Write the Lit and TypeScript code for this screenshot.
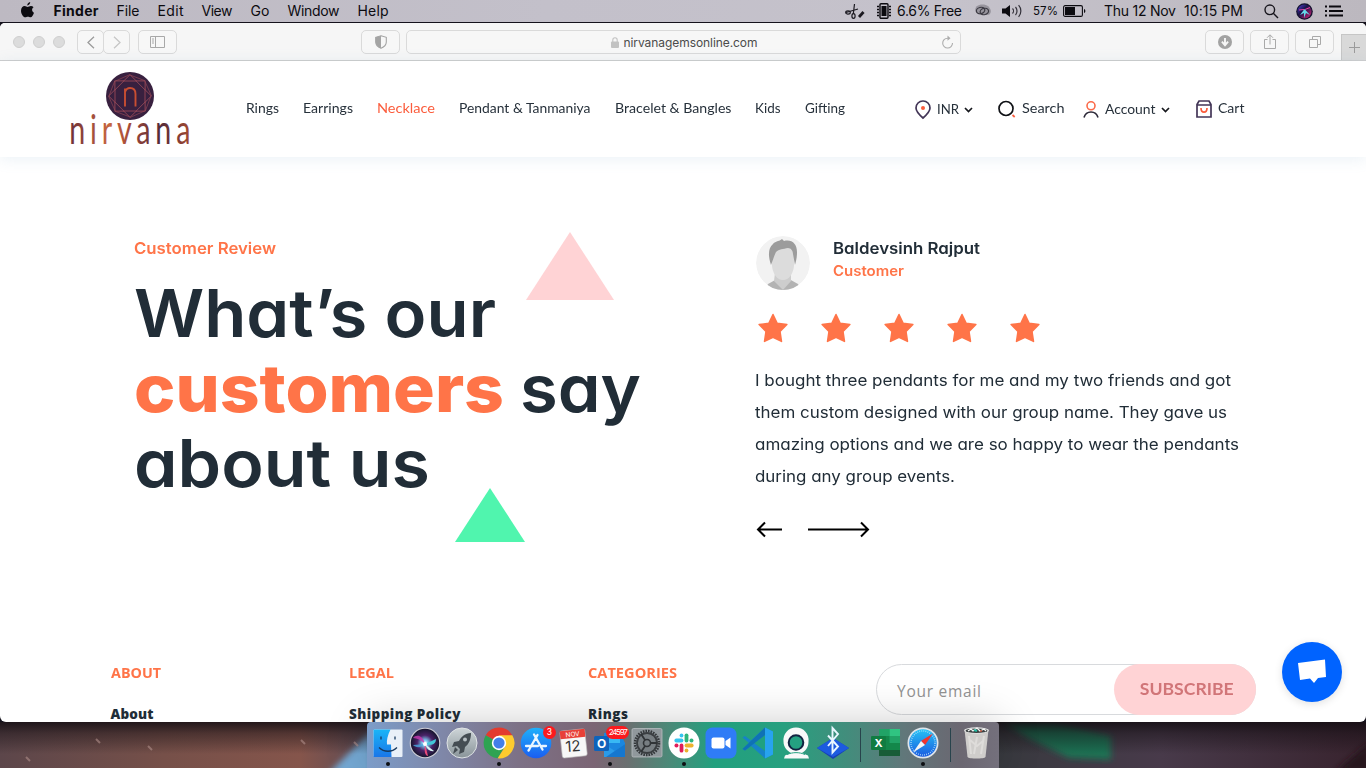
import { LitElement, html, css, svg } from "lit";
import { customElement } from "lit/decorators.js";

// A label set to an exact width: letter spacing absorbs the difference,
// or, with the "wide" class, the glyphs themselves are stretched.
const fit = (text: string, w: number, cls = "") =>
  html`<span class="fit ${cls}" data-w=${w}>${text}</span>`;

const base = css`
  :host { display: block; box-sizing: border-box; }
  * { box-sizing: border-box; }
  svg { display: block; flex: none; overflow: visible; }
  .fit { display: inline-block; white-space: nowrap; flex: none; transform-origin: 0 50%; }
`;

class FitElement extends LitElement {
  firstUpdated() {
    this.renderRoot.querySelectorAll<HTMLElement>(".fit").forEach((el) => {
      const target = Number(el.dataset.w);
      const natural = el.getBoundingClientRect().width;
      const n = (el.textContent || "").length - 1;
      if (el.classList.contains("wide")) el.style.transform = `scaleX(${(target / natural).toFixed(4)})`;
      else if (n > 0) el.style.letterSpacing = `${((target - natural) / n).toFixed(3)}px`;
      el.style.width = `${target}px`;
    });
  }
}

@customElement("menu-bar")
class MenuBar extends FitElement {
  static styles = [base, css`
    :host { height: 23px; border-bottom: 1px solid #15121c; color: #0c0b10;
      background: linear-gradient(90deg, #bdb9c2, #c3c0ca 40%, #c5c2cb 70%, #bcb8bf);
      font: 14px/22px Inter, sans-serif; }
    .bar { display: flex; height: 22px; align-items: center; }
    .apple { margin: 0 0 2px 21px; }
    .menus { display: flex; gap: 18px; margin-left: 19.500px; }
    .bold { font-weight: 700; }
    .status { display: flex; align-items: center; margin-left: auto; padding-right: 23px; }
    .free { margin-left: 6px; }
    .small { font-size: 11.5px; }
    .chip { margin-left: 12px; }
    .swirl { margin-left: 11px; }
    .vol { margin-left: 11px; }
    .pct { margin-left: 10px; }
    .batt { margin-left: 5px; }
    .date { margin-left: 18px; }
    .time { margin-left: 8px; }
    .find { margin-left: 21px; }
    .siri { margin-left: 17px; }
    .list { margin-left: 12px; }
  `];
  render() {
    return html`<div class="bar">
      <svg class="apple" width="13" height="16" viewBox="0 0 13 16"><path fill="#0c0b10" d="M9.2 0c.1 1.7-1.200 3.300-2.900 3.500C6.100 1.900 7.500.300 9.200 0zM12.600 5.300C10.400 6.700 10.700 9.700 13 10.700c-.6 1.900-2 4.600-3.500 4.600-.9 0-1.400-.6-2.600-.6s-1.700.6-2.600.6C2.400 15.300 0 12 0 8.700 0 5.900 1.700 4.100 3.700 4.100c1.200 0 2.100.8 2.900.8.8 0 1.900-.8 3.300-.8 1 0 2 .4 2.700 1.200z"/></svg>
      <div class="menus">
        ${fit("Finder", 45, "bold")}${fit("File", 23)}${fit("Edit", 26)}${fit("View", 31)}${fit("Go", 19)}${fit("Window", 52)}${fit("Help", 31)}
      </div>
      <div class="status">
        <svg width="20" height="17" viewBox="0 0 20 17" fill="none" stroke="#1b1920" stroke-width="1.200"><path d="M9.500 1L8.300 11M1 9.500L13 6"/><ellipse cx="3" cy="9.500" rx="2.300" ry="1.600"/><ellipse cx="8.500" cy="13" rx="1.600" ry="2.300"/><path stroke-width="2.800" d="M14 14l4.500-5"/></svg>
        <svg class="chip" width="14" height="16" viewBox="0 0 14 16"><rect x="3" y=".7" width="8" height="14.600" rx="1" fill="none" stroke="#0c0b10" stroke-width="1.400"/><rect x="4.500" y="3" width="5" height="10" fill="#0c0b10"/><path stroke="#0c0b10" stroke-width="1.300" d="M0 3.500h2M0 6.500h2M0 9.500h2M0 12.500h2M12 3.500h2M12 6.500h2M12 9.500h2M12 12.500h2"/></svg>
        ${fit("6.6% Free", 65, "free")}
        <svg class="swirl" width="18" height="14" viewBox="0 0 19 14"><path fill="#97949d" d="M4 2c3-2.500 9-2.500 12 0 3 3 4 6 1 9H9C4 11 0 6 4 2z"/><g fill="none" stroke="#3b3942" stroke-width="1.300"><ellipse cx="8" cy="6.500" rx="4.500" ry="3.300" transform="rotate(-15 8 6.500)"/><ellipse cx="12" cy="7.500" rx="4.500" ry="3.300" transform="rotate(-15 12 7.500)"/></g></svg>
        <svg class="vol" width="21" height="14" viewBox="0 0 21 14"><path fill="#0c0b10" d="M0 4.500h3.500L8 1v12L3.500 9.500H0z"/><path fill="none" stroke="#33313a" stroke-width="1.200" d="M10.500 4.500c1.300 1.300 1.300 3.700 0 5M13.500 3c2 2.200 2 5.800 0 8M16.600 1.200c3 3.300 3 8.300 0 11.600"/></svg>
        ${fit("57%", 25, "small pct")}
        <svg class="batt" width="23" height="12" viewBox="0 0 23 12"><rect x=".6" y=".6" width="18.800" height="10.800" rx="1.500" fill="none" stroke="#0c0b10" stroke-width="1.100"/><rect x="2" y="2" width="10" height="8" fill="#0c0b10"/><path d="M21 4c1.800.5 1.800 3.500 0 4z" fill="#0c0b10"/></svg>
        ${fit("Thu 12 Nov", 72, "date")}${fit("10:15 PM", 59, "time")}
        <svg class="find" width="15" height="15" viewBox="0 0 15 15" fill="none" stroke="#17151c" stroke-width="1.400"><circle cx="5.800" cy="5.800" r="4.800"/><path d="M9.300 9.300L14 14"/></svg>
        <svg class="siri" width="17" height="17" viewBox="0 0 17 17"><defs><linearGradient id="ms" x2="1" y2="1"><stop stop-color="#5440d8"/><stop offset=".4" stop-color="#19124a"/><stop offset="1" stop-color="#db2577"/></linearGradient></defs><circle cx="8.500" cy="8.500" r="8.300" fill="#14122e"/><circle cx="8.500" cy="8.500" r="7" fill="url(#ms)"/><path d="M8.500 6L4 12l4-2v5l2-5 4 2z" fill="#65d9ea"/><path d="M8 6.500L3 7M9 6.500l5-2" stroke="#e541a0"/></svg>
        <svg class="list" width="18" height="12" viewBox="0 0 18 12" stroke="#0c0b10" stroke-width="1.800"><path d="M0 1.500h2M0 6h2M0 10.500h2M4 1.500h12M4 6h14M4 10.500h14"/></svg>
      </div>
    </div>`;
  }
}

@customElement("browser-bar")
class BrowserBar extends FitElement {
  static styles = [base, css`
    :host { height: 38px; background: #f6f6f6; border-bottom: 1px solid #cdcdcd; font: 12px/23px Inter, sans-serif; color: #4b4b4b; }
    .bar { display: flex; height: 37px; align-items: center; padding: 1px 0 0 13px; }
    .lights { display: flex; gap: 8px; }
    .light { width: 12px; height: 12px; border-radius: 50%; background: #dcdcdc; border: 1px solid #cfcfcf; }
    .btn { height: 24px; width: 39px; border: 1px solid #dadada; border-radius: 5px; display: flex; align-items: center; justify-content: center; background: #f7f7f7; flex: none; }
    .pair { display: flex; margin: 0 8px 0 12px; }
    .half { width: 27px; }
    .half + .half { margin-left: -1px; }
    .shield { margin-left: 184px; }
    .url { width: 555px; margin-left: 6px; padding: 0 6px 0 204px; justify-content: flex-start; }
    .lock { margin-right: 4.500px; }
    .reload { margin-left: auto; }
    .right { display: flex; gap: 6px; margin-left: 244px; }
    .tab { width: 25px; height: 26px; border: 1px solid #c6c6c6; border-width: 1px 0 0 1px; background: #d9d9d9; margin-left: 7px; align-self: flex-end; display: flex; align-items: center; justify-content: center; }
  `];
  render() {
    return html`<div class="bar">
      <div class="lights"><i class="light"></i><i class="light"></i><i class="light"></i></div>
      <div class="pair">
        <div class="btn half"><svg width="8" height="13" viewBox="0 0 8 13" fill="none" stroke="#9b9b9b" stroke-width="1.300"><path d="M7 .8L1 6.500l6 5.700"/></svg></div>
        <div class="btn half"><svg width="8" height="13" viewBox="0 0 8 13" fill="none" stroke="#c6c6c6" stroke-width="1.300"><path d="M1 .8l6 5.700-6 5.700"/></svg></div>
      </div>
      <div class="btn"><svg width="15" height="12" viewBox="0 0 15 12" fill="none" stroke="#a8a8a8"><path d="M.5.5h14v11H.5zM5.500.5v11M2 3h2M2 5h2M2 7h2"/></svg></div>
      <div class="btn shield"><svg width="12" height="14" viewBox="0 0 12 14"><path d="M6 .7l5.300 1.600V7c0 3-2.300 5-5.300 6.300C3 12 .7 10 .7 7V2.300z" fill="none" stroke="#a4a4a4" stroke-width="1.100"/><path d="M6 .7v12.600C3 12 .7 10 .7 7V2.300z" fill="#a4a4a4"/></svg></div>
      <div class="btn url">
        <svg class="lock" width="8" height="11" viewBox="0 0 8 11"><rect y="4.500" width="8" height="6.500" rx="1" fill="#c2c2c2"/><path d="M1.800 5V3a2.200 2.200 0 014.400 0v2" fill="none" stroke="#c2c2c2" stroke-width="1.100"/></svg>
        ${fit("nirvanagemsonline.com", 134)}
        <svg class="reload" width="13" height="14" viewBox="0 0 13 14" fill="none" stroke="#acacac" stroke-width="1.100"><path d="M8 3.200H6.500a4.900 4.900 0 105 4.900"/><path d="M6.500.5L9.500 3.200l-3 2.600z" fill="#acacac" stroke="none"/></svg>
      </div>
      <div class="right">
        <div class="btn"><svg width="14" height="14" viewBox="0 0 14 14"><circle cx="7" cy="7" r="7" fill="#a2a2a2"/><path d="M7 3v5.500M3.900 6.700L7 10.200l3.100-3.500" stroke="#f6f6f6" stroke-width="1.900" fill="none"/></svg></div>
        <div class="btn"><svg width="12" height="16" viewBox="0 0 12 16" fill="none" stroke="#a9a9a9"><path d="M3.500 5.500h-3v9h11v-9h-3M6 10.500V1M3 3.800L6 .8l3 3"/></svg></div>
        <div class="btn"><svg width="12" height="12" viewBox="0 0 12 12" fill="none" stroke="#a9a9a9"><path d="M.5 3.500h8v8h-8zM3.500 3V.5h8v8H9"/></svg></div>
      </div>
      <div class="tab"><svg width="11" height="11" viewBox="0 0 11 11" stroke="#9b9b9b"><path d="M5.500 0v11M0 5.500h11"/></svg></div>
    </div>`;
  }
}

@customElement("shop-header")
class ShopHeader extends FitElement {
  static styles = [base, css`
    :host { height: 96px; background: #fff; box-shadow: 0 2px 14px rgba(125, 165, 200, .16); font: 13.300px/20px Lato, sans-serif; color: #27313b; }
    .bar { display: flex; align-items: center; height: 96px; padding-left: 70px; }
    .nav { display: flex; gap: 24px; margin: 0 0 2px 56px; }
    .active { color: #fb5c3c; }
    .tool { display: flex; align-items: center; }
    .tool .fit { margin: 0 0 2px 6px; }
    .chev { margin-left: 5px; }
    .inr { margin-left: 70px; padding-top: 1px; }
    .search { margin-left: 25px; }
    .acct { margin-left: 19px; padding-top: 1px; }
    .cart { margin-left: 26px; }
    .mark { font-family: Lato, sans-serif; }
  `];
  render() {
    const chev = html`<svg class="chev" width="9" height="6" viewBox="0 0 9 6" fill="none" stroke="#16181d" stroke-width="1.700"><path d="M1 1l3.500 3.500L8 1"/></svg>`;
    const spokes = Array.from({ length: 8 }, (_, i) => i * 45);
    return html`<div class="bar">
      <svg width="120" height="80" viewBox="0 0 120 80">
        <defs><linearGradient id="lg"><stop stop-color="#6d3038"/><stop offset=".33" stop-color="#c8673f"/><stop offset=".5" stop-color="#a44a38"/><stop offset=".75" stop-color="#532a38"/><stop offset="1" stop-color="#a34a32"/></linearGradient></defs>
        <circle cx="60" cy="27" r="24" fill="#38203f"/>
        <g fill="none" stroke="#9a4a58" stroke-width=".6">
          ${spokes.map((a) => svg`<path transform="rotate(${a} 60 27)" d="M60 5.500l-6.500 6.500M60 5.500l6.500 6.500M60 5.500L45.500 12M53.500 12L66.500 12"/>`)}
          <path opacity=".7" d="M45 12h30v30H45zM60 6l21 21-21 21-21-21z"/>
        </g>
        <path d="M55 37.500V19.500M55 23c1-3 3-4 5-4 4 0 5.500 2 5.500 6v12.500" fill="none" stroke="#c94e32" stroke-width="1.900"/>
        <text class="mark" transform="scale(.7 1)" x="-1" y="75.500" font-size="41" font-weight="400" textLength="173" lengthAdjust="spacing" fill="url(#lg)">nirvana</text>
      </svg>
      <div class="nav">
        ${fit("Rings", 33, "wide")}${fit("Earrings", 50, "wide")}${fit("Necklace", 58, "wide active")}${fit("Pendant & Tanmaniya", 131.500, "wide")}${fit("Bracelet & Bangles", 116.500, "wide")}${fit("Kids", 25.500, "wide")}${fit("Gifting", 40, "wide")}
      </div>
      <div class="tool inr"><svg width="16" height="19" viewBox="0 0 16 19"><path d="M8 1a6.900 6.900 0 017 7c0 3.500-3 6.500-7 10-4-3.500-7-6.500-7-10a6.900 6.900 0 017-7z" fill="none" stroke="#433657" stroke-width="1.700"/><circle cx="8" cy="8" r="2" fill="#fb5c3c"/></svg>${fit("INR", 22, "wide")}${chev}</div>
      <div class="tool search"><svg width="18" height="18" viewBox="0 0 18 18"><circle cx="8" cy="8.500" r="7" fill="none" stroke="#101216" stroke-width="1.700"/><path d="M14.500 15l2.200 2" stroke="#fb5c3c" stroke-width="1.700"/></svg>${fit("Search", 42.500, "wide")}</div>
      <div class="tool acct"><svg width="16" height="17" viewBox="0 0 16 17" fill="none" stroke-width="1.600"><circle cx="8" cy="4.800" r="4" stroke="#fb6a49"/><path d="M1 16.500c1-3.500 3.700-5.500 7-5.500s6 2 7 5.500" stroke="#2c2938"/></svg>${fit("Account", 50.500, "wide")}${chev}</div>
      <div class="tool cart"><svg width="16" height="18" viewBox="0 0 16 18" fill="none" stroke-width="1.700"><path d="M1 4.500L3 1h10l2 3.500V17H1zM1 5h14" stroke="#433657"/><path d="M5 8c0 5.500 6 5.500 6 0" stroke="#fb5c3c"/></svg>${fit("Cart", 26.500, "wide")}</div>
    </div>`;
  }
}

@customElement("review-section")
class ReviewSection extends FitElement {
  static styles = [base, css`
    :host { height: 507px; position: relative; padding: 79px 0 0 134px; color: #212d37; font-family: Inter, sans-serif; }
    .cols { display: grid; grid-template-columns: 621px 500px; }
    .eyebrow { font: 600 16px/24px Inter, sans-serif; color: #ff7448; }
    .title { margin: 16px 0 0; font: 600 66px/75px Inter, sans-serif; }
    .row { display: flex; gap: 16px; }
    .strong { font-weight: 800; color: #ff7448; }
    .tri { position: absolute; }
    .pink { left: 526px; top: 75px; }
    .green { left: 455px; top: 331px; }
    .who { display: flex; gap: 22px; }
    .name { font: 600 16px/24px Inter, sans-serif; }
    .role { font: 600 14px/22px Inter, sans-serif; color: #ff7448; }
    .names { display: flex; flex-direction: column; align-items: flex-start; }
    .stars { display: flex; gap: 33px; margin: 23px 0 0 2.500px; }
    .quote { font: 400 16px/32px Inter, sans-serif; margin-top: 21px; display: flex; flex-direction: column; align-items: flex-start; }
    .arrows { display: flex; gap: 26px; margin: 29px 0 0 2px; }
    .fit { font-feature-settings: "cv11" 1; }
  `];
  render() {
    return html`
      <div class="cols">
        <div>
          <div class="eyebrow">${fit("Customer Review", 142, "wide")}</div>
          <div class="title">
            <div class="row">${fit("What’s our", 362, "wide")}</div>
            <div class="row">${fit("customers", 370, "wide strong")}${fit("say", 121, "wide")}</div>
            <div class="row">${fit("about us", 296, "wide")}</div>
          </div>
        </div>
        <div>
          <div class="who">
            <svg width="56" height="54" viewBox="-1 0 56 54"><defs><clipPath id="c"><circle cx="27" cy="27" r="27"/></clipPath></defs><g clip-path="url(#c)"><circle cx="27" cy="27" r="27" fill="#f2f2f2"/><path d="M9 54l3-6 9-5h12l9 5 3 6z" fill="#b3b3b3"/><path d="M19 37h16v8l-8 9-9-9z" fill="#cdcdcd"/><path d="M16 14c4-4 18-4 22 0v16c-1 8-5 14-11 14s-10-6-11-14z" fill="#dcdcdc"/><path d="M15 29c-3-9-3-17 2-21 2-3 5-2 9-5l2 2c8-2 13 3 13 11 0 6-1 9-2 13l-2-11c0-3-2-6-5-6-5 1-9 1-12 4-2 4-3 8-5 13z" fill="#9c9c9c"/></g></svg>
            <div class="names">${fit("Baldevsinh Rajput", 147, "wide name")}${fit("Customer", 71, "wide role")}</div>
          </div>
          <div class="stars">
            ${[0, 1, 2, 3, 4].map(() => html`<svg width="30" height="30" viewBox="0 0 30 30"><path fill="#ff7448" stroke="#ff7448" stroke-width="1.500" stroke-linejoin="round" d="M15 1.500l4.200 8.800 9.700 1.200-6.900 6.900 1.500 10L15 24.300l-8.500 4.100 1.500-10-6.900-6.900 9.700-1.200z"/></svg>`)}
          </div>
          <div class="quote">
            ${fit("I bought three pendants for me and my two friends and got", 476, "wide")}
            ${fit("them custom designed with our group name. They gave us", 472, "wide")}
            ${fit("amazing options and we are so happy to wear the pendants", 484, "wide")}
            ${fit("during any group events.", 200, "wide")}
          </div>
          <div class="arrows">
            <svg width="25" height="16" viewBox="0 0 25 16" fill="none" stroke="#000" stroke-width="2"><path d="M25 8.500H1.500M8 1.500l-7 7 7 7"/></svg>
            <svg width="61" height="16" viewBox="0 0 61 16" fill="none" stroke="#000" stroke-width="2"><path d="M0 8.500h60M53 1.500l7 7-7 7"/></svg>
          </div>
        </div>
      </div>
      <svg class="tri pink" width="88" height="68" viewBox="0 0 88 68"><path d="M44 0l44 68H0z" fill="#ffd3d5"/></svg>
      <svg class="tri green" width="70" height="54" viewBox="0 0 70 54"><path d="M35 0l35 54H0z" fill="#50f5ae"/></svg>`;
  }
}

@customElement("shop-footer")
class ShopFooter extends FitElement {
  static styles = [base, css`
    :host { height: 58px; position: relative; }
    .grid { display: grid; grid-template-columns: 238.500px 239px 288px 406px; padding-left: 110.500px; }
    .head { font: 700 14px/18px "Open Sans", sans-serif; color: #ff7448; }
    .link { font: 800 13.500px/18px "Open Sans", sans-serif; color: #212d37; }
    .col { display: flex; flex-direction: column; align-items: flex-start; gap: 23px; }
    .mail { width: 380px; height: 51px; border: 1px solid #d8dadd; border-radius: 26px; display: flex; align-items: center; padding-left: 20px; font: 500 15.500px/20px "Open Sans", sans-serif; color: #929292; }
    .hint { padding-top: 3px; }
    .sub { margin: -1px -1px -1px auto; width: 142px; height: 51px; border-radius: 26px; background: #ffd3d5; color: #d17578; font: 700 17px/49px Lato, sans-serif; text-align: center; }
    .chat { width: 60px; height: 60px; border-radius: 50%; background: #0063ff; position: absolute; left: 1282px; top: -22px; box-shadow: 0 2px 8px rgba(0, 0, 0, .12); display: flex; align-items: center; justify-content: center; }
  `];
  render() {
    const col = (h: string, hw: number, l: string, lw: number) =>
      html`<div class="col">${fit(h, hw, "wide head")}${fit(l, lw, "link")}</div>`;
    return html`<div class="grid">
        ${col("ABOUT", 50, "About", 43)}${col("LEGAL", 45, "Shipping Policy", 111.500)}${col("CATEGORIES", 89, "Rings", 40)}
        <div class="mail">${fit("Your email", 84, "hint")}<div class="sub">${fit("SUBSCRIBE", 94, "wide")}</div></div>
      </div>
      <div class="chat"><svg width="28" height="26" viewBox="0 0 28 26"><path fill="#fff" d="M0 4l27-3.500L28 18l-8 1-4 5-4-4.500L2 21z"/></svg></div>`;
  }
}

@customElement("mac-dock")
class MacDock extends FitElement {
  static styles = [base, css`
    :host { width: 632px; height: 46px; border-radius: 4px 4px 0 0; font-family: Inter, sans-serif; box-shadow: 0 0 44px rgba(0, 0, 0, .2);
      background: linear-gradient(90deg, #7c9cc8, #7f87a8 12%, #7d7186 24%, #7b6574 36%, #6b6f70 41%, #4a8a78 48%, #22a07e 55%, #27a07f 66%, #428d7c 76%, #61777a 85%, #6b6771 94%, #74707c); }
    .apps { display: flex; padding: 0 4.500px; align-items: flex-start; }
    .app { width: 32px; margin-right: 5.100px; height: 46px; padding-top: 5px; display: flex; flex-direction: column; align-items: center; position: relative; flex: none; }
    .on::after { content: ""; width: 4px; height: 4px; border-radius: 50%; background: #0d0f12; margin-top: 3px; }
    .sep { width: 1px; height: 34px; background: #28434c; margin: 6px 8.500px 0 6.500px; flex: none; }
    .badge { position: absolute; top: 4px; right: -4px; height: 13px; min-width: 13px; padding: 0 3px; border-radius: 7px; background: #fb1a1e; color: #fff; font-size: 8.500px; line-height: 13px; text-align: center; }
    .big { right: -3px; padding: 0 2px; font-size: 8px; }
  `];
  render() {
    const sv = (body: unknown) => html`<svg width="32" height="32" viewBox="0 0 32 32">${body}</svg>`;
    const app = (body: unknown, on = false, extra: unknown = "") =>
      html`<div class="app ${on ? "on" : ""}">${sv(body)}${extra}</div>`;
    const slack = ["#36c5f0", "#2eb67d", "#ecb22e", "#e01e5a"];
    return html`<div class="apps">
      ${app(svg`<defs><linearGradient id="f1" x2="0" y2="1"><stop stop-color="#19b5f7"/><stop offset="1" stop-color="#1a76e8"/></linearGradient></defs><rect x="1.500" y="2.500" width="29" height="27.500" rx="1" fill="#e9f0f8"/><path d="M1.500 2.500h17c-3 6-4 11-3.500 15h4l.5 12.500h-18z" fill="url(#f1)"/><path d="M9 9.500v3M23 9.500v3M7 20.500c5 5 13 5 18 0" fill="none" stroke="#17395e" stroke-width="1.300"/>`, true)}
      ${app(svg`<defs><radialGradient id="s1"><stop stop-color="#fff"/><stop offset=".2" stop-color="#79c5ec"/><stop offset=".55" stop-color="#4a2368"/><stop offset="1" stop-color="#16152e"/></radialGradient></defs><circle cx="16" cy="16" r="15.300" fill="#cfcfd8"/><circle cx="16" cy="16" r="14.200" fill="url(#s1)"/><path d="M16 17C12 13 8 11 4 11c3-4 10-3 12 6z" fill="#c93bb0" opacity=".8"/><path d="M16 17L4 18c3 3 8 3 12-1z" fill="#4aa8e0" opacity=".8"/><path d="M16 17l11-5c0 5-4 7-11 5z" fill="#43c8da"/><path d="M16 17l3 12c-3 0-4-5-3-12z" fill="#e94a7a"/><path d="M16 17l9 7c-4 1-7-2-9-7z" fill="#d7f2f2"/><circle cx="16" cy="17" r="2" fill="#fff"/>`)}
      ${app(svg`<defs><linearGradient id="r1" x2="0" y2="1"><stop stop-color="#ced5d8"/><stop offset="1" stop-color="#899499"/></linearGradient></defs><circle cx="16" cy="16" r="15" fill="url(#r1)" stroke="#dfe3e5"/><path d="M25 6c-6 0-10 4-12 8l-5 1-2 5 5-1 3 3-1 5 5-2 1-5c4-3 6-8 6-14z" fill="#454d53"/><circle cx="19" cy="12.500" r="2" fill="#b6bec2"/><path d="M9 20l3 3-5 4z" fill="#454d53"/>`)}
      ${app(svg`<path d="M16 16L2.700 8.300A15.300 15.300 0 0129.300 8.300z" fill="#e33b2e"/><path d="M16 16L2.700 8.300a15.300 15.300 0 0012 23L22 19z" fill="#2ea352"/><path d="M22.500 19l-7.800 12.300a15.300 15.300 0 0014.600-23H16z" fill="#fdcb2e"/><circle cx="16" cy="16" r="7.200" fill="#fff"/><circle cx="16" cy="16" r="5.600" fill="#437fe9"/>`, true)}
      ${app(svg`<defs><linearGradient id="a1" x2="0" y2="1"><stop stop-color="#1fb1fb"/><stop offset="1" stop-color="#1a5df0"/></linearGradient></defs><circle cx="16" cy="16" r="15.300" fill="url(#a1)"/><path d="M17.500 8L10 21M14 7.500l8.500 15M6 19h12M22 19h4M9.500 22l-1 1.500" stroke="#e9f6ff" stroke-width="2.300" stroke-linecap="round"/>`, false, html`<span class="badge">3</span>`)}
      ${app(svg`<g transform="rotate(-6 16 16)"><rect x="4" y="3" width="25" height="27" rx="2" fill="#f7f7f7" stroke="#bdbdbd" stroke-width=".6"/><path d="M4 3h25v8H4z" fill="#e84038"/><text x="16.500" y="9.500" font-size="6.500" text-anchor="middle" fill="#fff">NOV</text></g><text x="16" y="24.500" font-size="15" text-anchor="middle" fill="#333" transform="rotate(-4 16 20)">12</text>`)}
      ${app(svg`<path d="M10 6h16l5 10v13H10z" fill="#1b87df"/><path d="M14 7h12v9H14z" fill="#38b8f4"/><path d="M10 17l11 7 10-7v13H10z" fill="#2a9be9"/><path d="M31 17L12 30h19z" fill="#1577cf"/><rect x="0" y="9" width="15" height="15" rx="1.500" fill="#0f63bb"/><text x="7.500" y="21" font-size="12" font-weight="700" text-anchor="middle" fill="#fff">O</text>`, true, html`<span class="badge big">${fit("24597", 19)}</span>`)}
      ${app(svg`<rect x="1" y="1.500" width="30" height="28.500" rx="1.500" fill="#90989c" stroke="#b8bdc0" stroke-width=".8"/><circle cx="16" cy="16" r="12" fill="none" stroke="#34383b" stroke-width="2.500" stroke-dasharray="1.600 1"/><circle cx="16" cy="16" r="10" fill="#777e82" stroke="#3a3e41" stroke-width="1.800"/><circle cx="16" cy="16" r="3.500" fill="none" stroke="#303437" stroke-width="1.600"/><path d="M19.500 16h7M14 13l-4-6M14 19l-4 6" stroke="#303437" stroke-width="1.800"/>`)}
      ${app(svg`<circle cx="16" cy="16" r="15.500" fill="#fff"/>${slack.map((c, i) => svg`<g transform="rotate(${i * 90} 16 16)" stroke=${c} stroke-width="3.800" stroke-linecap="round"><path d="M8.300 13.500h5.200"/><path d="M13.500 8.400v.2"/></g>`)}`, true)}
      ${app(svg`<rect x=".5" y=".5" width="31" height="31" rx="7" fill="#2f7cf6"/><rect x="6.500" y="10.500" width="13" height="11" rx="2" fill="#fff"/><path d="M20.500 14l5-3.500v11l-5-3.500z" fill="#fff"/>`)}
      ${app(svg`<path d="M23 .5l8 4v23l-8 4L9 19l-6 4.500L.5 22 7 16 .5 10.500 3 9l6 4.500z" fill="#1683c8"/><path d="M23 8v16l-11-8z" fill="#20a17f"/><path d="M23 .5l8 4v23l-8 4z" fill="#27a3ee"/><path d="M.5 22L23 .5V8L3 23.500z" fill="#0f72b5"/>`)}
      ${app(svg`<path d="M16 .5a12.500 12.500 0 0112.500 14c0 7-4 10-6.500 11.500l6 2.500 1 3H4l1-3 6-2.500C8 24 3.500 21 3.500 14.500A12.500 12.500 0 0116 .5z" fill="#f8f9f9"/><circle cx="16" cy="15.500" r="7.300" fill="#24a181" stroke="#122341" stroke-width="2"/><path d="M7 27.500c6-2.500 12-2.500 18 0" fill="none" stroke="#24a181"/>`)}
      ${app(svg`<path d="M16 11l16 10-16 11L0 21z" fill="#1740b5"/><path d="M16 11l16 10-16 9L0 21z" fill="#1c5be0"/><path d="M11 8.500l10 11-5.500 6V1l5.500 6-10 12" fill="none" stroke="#e9f7ff" stroke-width="1.900"/>`)}
      <i class="sep"></i>
      ${app(svg`<path d="M9 2h21v27H9z" fill="#13874a"/><path d="M9 2h10.500v7H9z" fill="#21a366"/><path d="M19.500 2H30v7H19.500z" fill="#30c481"/><path d="M19.500 9H30v7H19.500z" fill="#21a366"/><path d="M9 23h21v6H9z" fill="#185c37"/><rect x="1" y="9" width="15" height="14" rx="1" fill="#107c41"/><text x="8.500" y="20" font-size="11" font-weight="700" text-anchor="middle" fill="#fff">X</text>`)}
      ${app(svg`<defs><linearGradient id="b1" x2="0" y2="1"><stop stop-color="#26c2f5"/><stop offset="1" stop-color="#1b5be0"/></linearGradient></defs><circle cx="16" cy="16" r="15.500" fill="#dfe5ea"/><circle cx="16" cy="16" r="13.800" fill="url(#b1)"/><circle cx="16" cy="16" r="12" fill="none" stroke="#bfe6fb" stroke-width="1.500" stroke-dasharray=".7 1.400"/><path d="M26 6.500L14 14l4 4z" fill="#f0342f"/><path d="M6 25.500L14 14l4 4z" fill="#f4f4f4"/>`, true)}
      <i class="sep"></i>
      ${app(svg`<path d="M4.500 2.500h24L25.500 30c-1 2-17 2-18 0z" fill="#cfcdcb"/><path d="M9 9l2 18M17 10l-3 17M24 9l-3 18M10 13l7 6 6-5" stroke="#dedcda" stroke-width="2" fill="none"/><ellipse cx="16.500" cy="3.500" rx="12.300" ry="3.300" fill="#e4e4e4"/><ellipse cx="16.500" cy="3.700" rx="11" ry="2.300" fill="#3d4243"/><path d="M8 4l3-2 2 2 4-3 3 3 4-2 2 2" stroke="#f2f4f3" stroke-width="1.300" fill="none"/><path d="M14 3l3 1" stroke="#21b8a0" stroke-width="2"/><path d="M20 4l2 0" stroke="#b0472e" stroke-width="1.600"/>`)}
    </div>`;
  }
}

@customElement("app-root")
class AppRoot extends LitElement {
  static styles = [base, css`
    :host { display: flex; flex-direction: column; width: 1366px; height: 768px; overflow: hidden; position: relative; background: #15121c; }
    .window { height: 699px; background: #fff; border-radius: 5px 5px 6px 6px; overflow: hidden; flex: none; position: relative; }
    shop-header { position: relative; }
    .desk { height: 46px; display: flex; justify-content: center; position: relative; flex: none; }
    .wall { position: absolute; left: 0; top: 0; overflow: hidden; }
    mac-dock { position: relative; }
  `];
  render() {
    return html`<menu-bar></menu-bar>
      <div class="window">
        <browser-bar></browser-bar>
        <shop-header></shop-header>
        <review-section></review-section>
        <shop-footer></shop-footer>
      </div>
      <div class="desk">
        <svg class="wall" width="1366" height="46" viewBox="0 0 1366 46">
          <defs>
            <linearGradient id="w"><stop stop-color="#5c464a"/><stop offset=".12" stop-color="#765049"/><stop offset=".22" stop-color="#85554b"/><stop offset=".27" stop-color="#5d4b55"/><stop offset=".73" stop-color="#383a3f"/><stop offset=".85" stop-color="#483a4a"/><stop offset="1" stop-color="#38232e"/></linearGradient>
            <linearGradient id="d" x2="0" y2="1"><stop stop-color="#130d12" stop-opacity=".85"/><stop offset=".35" stop-color="#130d12" stop-opacity=".45"/><stop offset="1" stop-color="#130d12" stop-opacity="0"/></linearGradient>
            <filter id="bl"><feGaussianBlur stdDeviation="3"/></filter>
          </defs>
          <path d="M0 0h1366v46H0z" fill="url(#w)"/>
          <path d="M328 52L372 8v44z" fill="#74a9d4" filter="url(#bl)"/>
          <path d="M1003 0h50l58 14v24l-42-2-40-20z" fill="#1b7152" filter="url(#bl)"/>
          <path d="M1335 50l35-30v30z" fill="#26141c" filter="url(#bl)"/>
          <path d="M0 0h1366v32H0z" fill="url(#d)"/>
          <g stroke="#b08f8a" stroke-width="2" opacity=".6"><path d="M96 17l4 4M26 35l4 4M301 18l4 4M148 24l4 4M354 20l4 4"/></g>
        </svg>
        <mac-dock></mac-dock>
      </div>`;
  }
}
